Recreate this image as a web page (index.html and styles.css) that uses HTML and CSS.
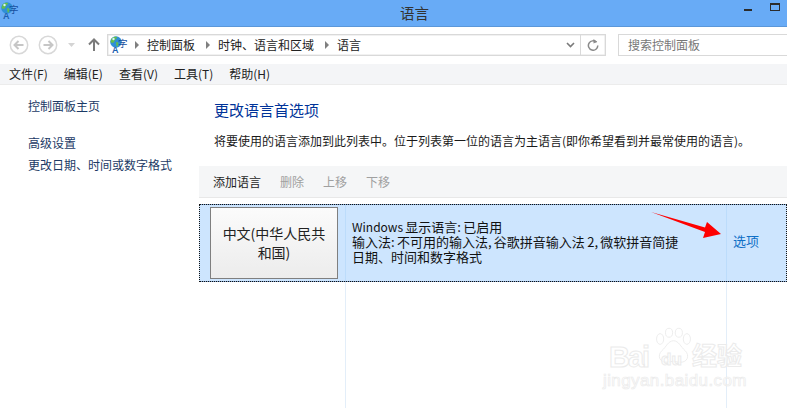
FILE: index.html
```html
<!DOCTYPE html>
<html lang="zh">
<head>
<meta charset="utf-8">
<title>语言</title>
<link rel="stylesheet" href="styles.css">
</head>
<body>
<svg class="defs" width="0" height="0">
  <symbol id="globe" viewBox="0 0 20 20" overflow="visible">
    <circle cx="7" cy="7" r="5.800" fill="#2f8fd6"/>
    <path d="M2.500 3.500c2-2 4-2.200 5.500-1.500 0 2-2 2-2.500 4S3 8.500 1.500 7zM7.500 7c2 0 2.500 2 1.500 3.500-1 2-1.500 1-1.500 0S6.500 8 7.500 7z" fill="#62bd4f"/>
    <circle cx="4.500" cy="4" r="1.200" fill="#d6f0ff"/>
    <text class="icon-a" x="3" y="18">A</text>
    <text class="icon-zi" x="9" y="12">字</text>
  </symbol>
</svg>
<div class="window">
  <header class="titlebar">
    <svg class="title-icon"><use href="#globe"/></svg>
    <div class="title">语言</div>
    <div class="winbtns">
      <span class="minimize"></span>
      <span class="maximize"></span>
    </div>
  </header>
  <nav class="navbar">
    <svg class="navcircle" viewBox="0 0 20 20"><circle cx="10" cy="10" r="8.700" fill="#fff" stroke="#d8d8d8" stroke-width="1.500"/><path d="M14.500 10H6M9.500 6 5.500 10l4 4" fill="none" stroke="#c6c6c6" stroke-width="2"/></svg>
    <svg class="navcircle" viewBox="0 0 20 20"><circle cx="10" cy="10" r="8.700" fill="#fff" stroke="#d8d8d8" stroke-width="1.500"/><path d="M5.500 10H14M10.500 6l4 4-4 4" fill="none" stroke="#c6c6c6" stroke-width="2"/></svg>
    <svg class="navdown" viewBox="0 0 8 5"><path d="M0 0h7L3.500 4z" fill="#d4d4d4"/></svg>
    <svg class="navup" viewBox="0 0 12 14"><path d="M6 13V2M1 6.500 6 1.500l5 5" fill="none" stroke="#7b7b7b" stroke-width="2"/></svg>
    <div class="address">
      <svg class="addr-icon"><use href="#globe"/></svg>
      <div class="crumbs">
        <span class="sep"></span><span>控制面板</span>
        <span class="sep"></span><span>时钟、语言和区域</span>
        <span class="sep"></span><span>语言</span>
      </div>
      <svg class="chev" viewBox="0 0 9 6"><path d="M1 1l3.500 3.500L8 1" fill="none" stroke="#7a7a7a" stroke-width="1.600"/></svg>
      <div class="refresh">
        <svg viewBox="0 0 12 12"><path d="M9.500 3.300A4.700 4.700 0 1 0 10.800 6.500" fill="none" stroke="#8a8a8a" stroke-width="1.500"/><path d="M6.500 0v4.500l3.700-1.800z" fill="#8a8a8a"/></svg>
      </div>
    </div>
    <div class="search">搜索控制面板</div>
  </nav>
  <div class="menubar">
    <span>文件(F)</span><span>编辑(E)</span><span>查看(V)</span><span>工具(T)</span><span>帮助(H)</span>
  </div>
  <main class="body">
    <aside class="sidebar">
      <a class="side-home">控制面板主页</a>
      <a class="side-link">高级设置</a>
      <a class="side-link">更改日期、时间或数字格式</a>
    </aside>
    <section class="content">
      <div class="intro">
        <h1>更改语言首选项</h1>
        <p>将要使用的语言添加到此列表中。位于列表第一位的语言为主语言(即你希望看到并最常使用的语言)。</p>
      </div>
      <div class="toolbar">
        <span>添加语言</span><span class="off">删除</span><span class="off">上移</span><span class="off">下移</span>
      </div>
      <div class="lang-row">
        <div class="cell-btn"><button class="lang-btn">中文(中华人民共和国)</button></div>
        <div class="cell-info">
          <div><span class="latin">Windows</span> 显示语言: 已启用</div>
          <div>输入法: 不可用的输入法, 谷歌拼音输入法 2, 微软拼音简捷</div>
          <div>日期、时间和数字格式</div>
        </div>
        <div class="cell-opt"><a>选项</a></div>
      </div>
      <div class="columns"><div class="col-a"></div><div class="col-b"></div><div class="col-c"></div></div>
    </section>
  </main>
</div>
<svg class="arrow" viewBox="0 0 75 30"><polygon points="0,0 54,15.500 56,10 70,22 52,26 54,20" fill="#fe0000"/></svg>
<div class="watermark">
  <span class="wm-bai">Bai</span>
  <svg class="paw" viewBox="0 0 46 42"><g fill="#fff" stroke="#ebebeb" stroke-width="1"><ellipse cx="8" cy="12" rx="4" ry="6"/><ellipse cx="18" cy="5" rx="4" ry="5"/><ellipse cx="29" cy="5" rx="4" ry="5"/><ellipse cx="38" cy="12" rx="4" ry="6"/><path d="M23 14c6 0 8 7 13 11 6 6 2 14-6 13-3 0-5-1-7-1s-4 1-7 1c-8 1-12-7-6-13 5-4 7-11 13-11z"/></g></svg>
  <span class="wm-du">du</span>
  <span class="wm-cn">经验</span>
  <div class="wm-url">jingyan.baidu.com</div>
</div>
</body>
</html>
```
FILE: styles.css
```css
* { box-sizing: border-box; }
html, body { margin: 0; height: 100%; }
body {
  width: 787px;
  height: 408px;
  overflow: hidden;
  position: relative;
  background: #fff;
  font-family: "Noto Sans CJK SC", "Liberation Sans", sans-serif;
  font-size: 12px;
  color: #1e1e1e;
}
.defs { position: absolute; }
.icon-a { font: 700 9px "Liberation Sans", sans-serif; fill: #1c5fb0; }
.icon-zi { font: 400 9.500px "Noto Sans CJK SC", sans-serif; fill: #17509f; }
.window { display: flex; flex-direction: column; height: 408px; }

.titlebar {
  height: 27px;
  flex: none;
  background: #68abf6;
  border-bottom: 1px solid #5b97d9;
  display: flex;
  position: relative;
}
.title-icon { width: 20px; height: 20px; margin-top: 1px; overflow: visible; }
.title {
  position: absolute;
  left: 400px;
  top: 2px;
  font-size: 14.500px;
  line-height: 21px;
  color: #333;
}
.winbtns { margin-left: auto; display: flex; align-items: flex-start; padding-right: 7px; }
.minimize { width: 8px; height: 2px; background: #2b2b2b; margin-top: 9px; margin-right: 18px; }
.maximize { width: 10px; height: 8px; border: 1px solid #2b2b2b; border-top-width: 2px; margin-top: 3px; }

.navbar {
  height: 37px;
  flex: none;
  display: flex;
  align-items: center;
  padding: 0 0 1px 9px;
}
.navcircle { width: 20px; height: 20px; margin-right: 9px; }
.navdown { width: 8px; height: 5px; margin-left: 1px; margin-right: 12px; }
.navup { width: 12px; height: 14px; margin-right: 7px; }
.address {
  width: 499px;
  height: 22px;
  border: 1px solid #d9d9d9;
  display: flex;
  align-items: center;
  padding-left: 1px;
  box-shadow: inset 0 0 0 .5px #e4e4e4;
}
.addr-icon { width: 20px; height: 20px; flex: none; overflow: visible; }
.crumbs { display: flex; align-items: center; line-height: 20px; color: #222; flex: 1; padding-left: 6px; }
.sep {
  width: 0; height: 0;
  border-left: 4px solid #7f7f7f;
  border-top: 4px solid transparent;
  border-bottom: 4px solid transparent;
  margin-right: 8px;
}
.crumbs span:not(.sep) { margin-right: 11px; }
.chev { width: 9px; height: 6px; margin-right: 5px; }
.refresh {
  width: 25px;
  height: 20px;
  border-left: 1px solid #d9d9d9;
  display: flex;
  align-items: center;
  justify-content: center;
}
.refresh svg { width: 12px; height: 12px; }
.search {
  margin-left: 12px;
  flex: 1;
  height: 22px;
  border: 1px solid #d9d9d9;
  border-right: 0;
  padding-left: 9px;
  line-height: 20px;
  color: #777;
}

.menubar {
  height: 20px;
  flex: none;
  background: #f4f5f7;
  display: flex;
  gap: 16px;
  padding-left: 9px;
  line-height: 20px;
  color: #222;
}
.body { flex: 1; display: flex; border-top: 1px solid #ececec; min-height: 0; }
.sidebar {
  width: 199px;
  flex: none;
  display: flex;
  flex-direction: column;
  padding: 12px 0 0 28px;
  color: #1c3a66;
  line-height: 18px;
}
.side-home { margin-bottom: 19px; }
.side-link { margin-bottom: 4px; }

.content { flex: 1; display: flex; flex-direction: column; min-width: 0; }
.intro { padding: 14px 0 0 15px; height: 81px; }
.intro h1 {
  margin: 0;
  font-size: 15px;
  font-weight: 400;
  line-height: 22px;
  color: #003399;
}
.intro p { margin: 11px 0 0; line-height: 18px; color: #1a1a1a; white-space: nowrap; }

.toolbar {
  height: 32px;
  flex: none;
  background: #f5f6f7;
  border-bottom: 1px solid #e8e8e8;
  display: flex;
  gap: 19px;
  align-items: center;
  padding-left: 14px;
}
.off { color: #a0a0a0; }

.lang-row {
  margin-top: 6px;
  height: 78px;
  flex: none;
  background: #cde5fe;
  outline: 1px dotted #111;
  outline-offset: -1px;
  border-top: 1px solid #7da2ce;
  border-bottom: 1px solid #7da2ce;
  display: flex;
}
.cell-btn {
  width: 147px;
  flex: none;
  padding: 2px 7px 2px 11px;
  border-right: 1px solid #bcdcfb;
}
.lang-btn {
  width: 128px;
  height: 72px;
  border: 1px solid #7f7f7f;
  background: linear-gradient(#fbfbfb, #ececec);
  font: inherit;
  font-size: 14px;
  line-height: 19px;
  color: #222;
  padding: 0 10px;
}
.cell-info {
  flex: none;
  width: 381px;
  border-right: 1px solid #bcdcfb;
  padding: 14px 0 0 6px;
  font-size: 13px;
  line-height: 15px;
  word-spacing: -.6px;
  color: #111;
  white-space: nowrap;
}
.latin { font-size: 12px; }
.cell-opt { flex: 1; padding: 27px 0 0 6px; font-size: 13px; color: #0f6fc6; line-height: 18px; }

.columns { flex: 1; display: flex; min-height: 0; }
.col-a { width: 147px; border-right: 1px solid #e3eef9; }
.col-b { width: 381px; border-right: 1px solid #e3eef9; }
.col-c { flex: 1; }

.arrow { position: absolute; left: 651px; top: 212px; width: 75px; height: 30px; }

.watermark { position: absolute; left: 602px; top: 330px; width: 150px; height: 62px; }
.wm-bai, .wm-du, .wm-url, .wm-cn {
  position: absolute;
  color: rgba(255, 255, 255, .6);
  -webkit-text-stroke: 1px #ebebeb;
  font-family: "Liberation Sans", sans-serif;
  line-height: 1;
  white-space: nowrap;
}
.wm-bai { left: 7px; top: 13px; font-size: 29px; font-weight: 700; letter-spacing: -2px; }
.paw { position: absolute; left: 51px; top: -3px; width: 41px; height: 40px; }
.wm-du { left: 59px; top: 21px; font-size: 17px; font-weight: 700; }
.wm-cn {
  left: 90px;
  top: 12px;
  font-family: "Noto Sans CJK SC", sans-serif;
  font-size: 25px;
  font-weight: 700;
}
.wm-url { left: 1px; top: 42px; font-size: 17px; letter-spacing: .4px; -webkit-text-stroke-width: .7px; }
```
